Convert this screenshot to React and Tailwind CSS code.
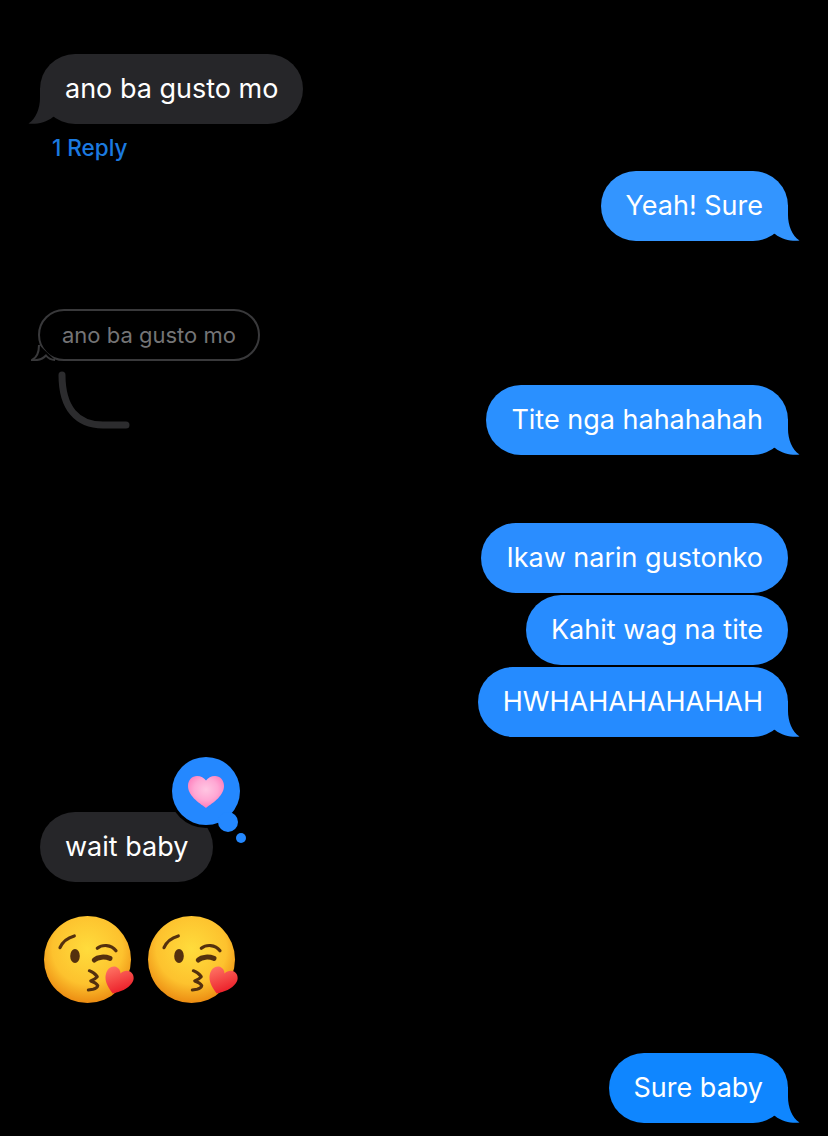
import { useId } from "react"

// cola de la burbuja, dibujada hacia la derecha; la izquierda se refleja
function Tail({ color, left }) {
  return (
    <svg
      width="27"
      height="36"
      viewBox="0 0 27 36"
      className={`absolute bottom-0 ${left ? "left-[-12px] -scale-x-100" : "right-[-12px]"}`}
    >
      <path d="M0 0H15V10C15 20 19 31 26.500 35.500C20 36.500 9 35 2 29L0 28Z" fill={color} />
    </svg>
  )
}

function Bubble({ text, color, tail, left, className = "" }) {
  return (
    <div
      className={`relative flex h-[70px] items-center rounded-[35px] px-[25px] pt-px text-[27px] font-[385] text-white ${left ? "self-start" : "self-end"} ${className}`}
      style={{ backgroundColor: color }}
    >
      <span className="whitespace-nowrap">{text}</span>
      {tail && <Tail color={color} left={left} />}
    </div>
  )
}

function Tapback() {
  const id = useId()
  return (
    <svg width="84" height="92" viewBox="0 0 84 92" className="absolute left-[126px] top-[-58px]">
      <defs>
        <radialGradient id={id} cx="0.5" cy="0.42" r="0.6">
          <stop offset="0" stopColor="#ffc6e2" />
          <stop offset="0.55" stopColor="#ffa8d4" />
          <stop offset="1" stopColor="#ff78b8" />
        </radialGradient>
      </defs>
      <circle cx="40" cy="37" r="37" fill="#000" />
      <circle cx="62" cy="68" r="13" fill="#000" />
      <circle cx="40" cy="37" r="34" fill="#2488ff" />
      <circle cx="62" cy="68" r="10" fill="#2488ff" />
      <circle cx="75" cy="84" r="5" fill="#2488ff" />
      <path
        d="M40 54C36 50.500 22 43 22 32C22 26 26 22 31 22C35 22 38 24 40 26.500C42 24 45 22 49 22C54 22 58 26 58 32C58 43 44 50.500 40 54Z"
        fill={`url(#${id})`}
      />
    </svg>
  )
}

function KissEmoji() {
  const face = useId()
  const heart = useId()
  return (
    <svg width="92" height="92" viewBox="0 0 92 92">
      <defs>
        <radialGradient id={face} cx="0.5" cy="0.38" r="0.62">
          <stop offset="0" stopColor="#ffdc3c" />
          <stop offset="0.65" stopColor="#fdc22e" />
          <stop offset="1" stopColor="#ec8c12" />
        </radialGradient>
        <linearGradient id={heart} x1="0.2" y1="0" x2="0.6" y2="1">
          <stop offset="0" stopColor="#ff7464" />
          <stop offset="1" stopColor="#ea1a26" />
        </linearGradient>
      </defs>
      <circle cx="45.500" cy="45.500" r="43.500" fill={`url(#${face})`} />
      <g fill="none" stroke="#54300e" strokeLinecap="round" strokeLinejoin="round">
        <path d="M18 33.700C20.500 28 25 24 32.300 22" strokeWidth="3.200" />
        <path d="M55.300 34.300C60 30.500 69 30 74 36.700" strokeWidth="3.200" />
        <path d="M52.300 46C56 42.500 63 42.500 68 44.300" strokeWidth="5" />
        <path d="M47.300 56.700C50.500 58 53.500 60 55.300 62.700C53.500 64.800 51 66 48.700 67C51.500 68 54.500 69.500 55.800 71.500C55.500 73.500 54 74.500 51 75.200L46.300 76" strokeWidth="3" />
      </g>
      <ellipse cx="33" cy="42" rx="4.800" ry="7" fill="#54300e" />
      <path
        d="M70.700 79.500C66 73 62.500 67 63.700 61C65 54 70 51.500 74 52.800C77 54 78.500 57 78.500 59.500C81 57 85 56 88 57.500C92 60 92.800 65 90 69C86 75 78 78 70.700 79.500Z"
        fill={`url(#${heart})`}
      />
    </svg>
  )
}

export default function App() {
  return (
    <div
      className="flex h-[1136px] w-full flex-col overflow-hidden bg-black px-10 pt-[54px]"
      style={{ fontFamily: '"Inter", "Liberation Sans", sans-serif' }}
    >
      <Bubble text="ano ba gusto mo" color="#262629" tail left />
      <div className="ml-3 mt-3 h-6 text-[22.500px] font-medium leading-6 text-[#1b7ae0]">1 Reply</div>
      <Bubble text="Yeah! Sure" color="#3395ff" tail className="mt-[11px]" />

      {/* hilo de respuesta */}
      <div className="mt-[68px] flex items-start justify-between">
        <div className="flex flex-col">
          <div className="relative -ml-[2px] flex h-[52px] items-center rounded-[26px] border-2 border-[#39393b] px-[22px] text-[22px] text-[#747476]">
            <span className="whitespace-nowrap">ano ba gusto mo</span>
            <svg width="26" height="16" viewBox="0 0 26 16" className="absolute bottom-[-2px] left-[-9px]">
              <path d="M8 0C8 6 7 12 1 15C6 15.500 12 14 15 10.500C17 13 20 15 24 15" fill="#000" stroke="#39393b" strokeWidth="2" />
            </svg>
          </div>
          <svg width="76" height="62" viewBox="0 0 76 62" className="ml-[17px] mt-[9px]">
            <path d="M5 5C5 38 20 55 46 55H69" fill="none" stroke="#2c2c2e" strokeWidth="7" strokeLinecap="round" />
          </svg>
        </div>
        <Bubble text="Tite nga hahahahah" color="#2a90ff" tail className="mt-[76px]" />
      </div>

      <div className="mt-[68px] flex flex-col gap-[2px]">
        <Bubble text="Ikaw narin gustonko" color="#2a8dff" />
        <Bubble text="Kahit wag na tite" color="#278cff" />
        <Bubble text="HWHAHAHAHAHAH" color="#258bff" tail />
      </div>

      <div className="relative mt-[75px] self-start">
        <Bubble text="wait baby" color="#262629" />
        <Tapback />
      </div>

      <div className="ml-[2px] mt-8 flex gap-3">
        <KissEmoji />
        <KissEmoji />
      </div>

      <Bubble text="Sure baby" color="#0f86ff" tail className="mt-[47px]" />
    </div>
  )
}
